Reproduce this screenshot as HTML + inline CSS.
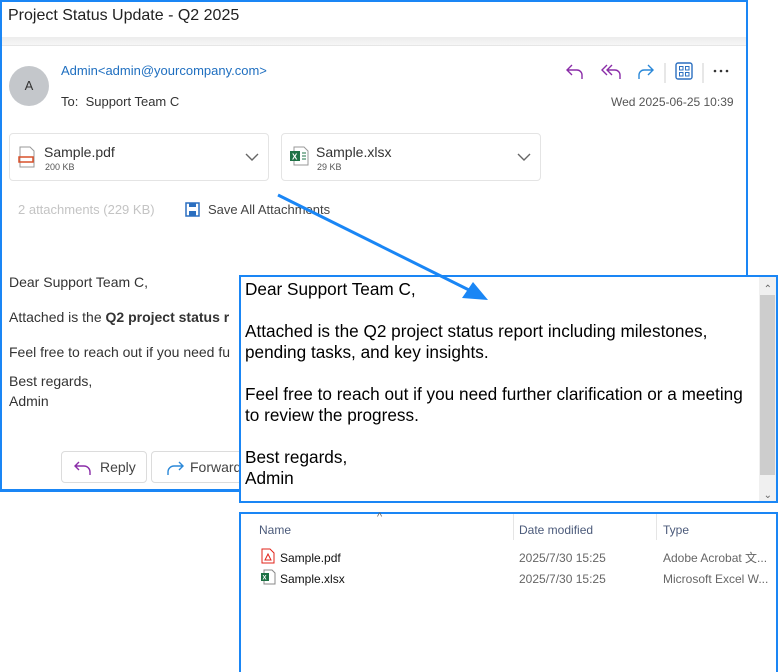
<!DOCTYPE html>
<html><head><meta charset="utf-8"><style>
*{margin:0;padding:0;box-sizing:border-box}
body{width:778px;height:672px;background:#fff;font-family:"Liberation Sans",sans-serif;position:relative;overflow:hidden;color:#242424}
.a{position:absolute}
.mail{left:0;top:0;width:748px;height:492px;border:2px solid #1a86f5;border-bottom-width:3px}
.title{left:8px;top:7px;font-size:16px;color:#222}
.shadow{left:2px;top:37px;width:744px;height:9px;background:linear-gradient(#ececec,#f6f6f6);border-bottom:1px solid #e6e6e6}
.av{left:9px;top:66px;width:40px;height:40px;border-radius:50%;background:#c4c7cb;font-size:13px;text-align:center;line-height:40px;color:#333}
.att{height:48px;border:1px solid #e4e4e4;border-radius:4px;top:133px}
.btn{top:451px;height:32px;border:1px solid #dcdcdc;border-radius:4px;font-size:14px;color:#444;line-height:30px}
.tb{left:239px;top:275px;width:539px;height:228px;border:2px solid #1a86f5;background:#fff;font-family:"Liberation Sans",sans-serif;font-size:17.2px;color:#000;line-height:21px}
.ex{left:239px;top:512px;width:539px;height:160px;border:2px solid #1a86f5;border-bottom:none;background:#fff;font-size:12px}
</style></head><body>
<div class="a mail"></div>
<div class="a title">Project Status Update - Q2 2025</div>
<div class="a shadow"></div>
<div class="a av">A</div>
<div class="a" style="left:61px;top:63px;font-size:13px;color:#1f6fc0">Admin&lt;admin@yourcompany.com&gt;</div>
<div class="a" style="left:61px;top:94px;font-size:13px;color:#333">To:&nbsp; Support Team C</div>
<div class="a" style="left:611px;top:95px;font-size:12px;color:#555">Wed 2025-06-25 10:39</div>
<svg class="a" style="left:560px;top:58px" width="180" height="28" fill="none" stroke-width="1.4">
<path d="M12 7l-5 5 5 5M7 12h10a5 5 0 0 1 5 5v4" stroke="#8a2da8"/>
<path d="M47 7l-5 5 5 5M52 7l-5 5 5 5M47 12h8a5 5 0 0 1 5 5v4" stroke="#8a2da8"/>
<path d="M88 7l5 5-5 5M93 12h-9a5 5 0 0 0-5 5v4" stroke="#2b88d8"/>
<path d="M105 5v20M143 5v20" stroke="#ddd"/>
<rect x="116" y="5" width="16" height="16" rx="2" stroke="#2b6fc0"/>
<rect x="119.5" y="8.5" width="3.5" height="3.5" stroke="#2b6fc0" stroke-width="1"/><rect x="125.5" y="8.5" width="3.5" height="3.5" stroke="#2b6fc0" stroke-width="1"/><rect x="119.5" y="14.5" width="3.5" height="3.5" stroke="#2b6fc0" stroke-width="1"/><rect x="125.5" y="14.5" width="3.5" height="3.5" stroke="#2b6fc0" stroke-width="1"/>
<circle cx="155" cy="13" r="1.3" fill="#333" stroke="none"/><circle cx="161" cy="13" r="1.3" fill="#333" stroke="none"/><circle cx="167" cy="13" r="1.3" fill="#333" stroke="none"/>
</svg>
<div class="a att" style="left:9px;width:260px"></div>
<div class="a att" style="left:281px;width:260px"></div>
<svg class="a" style="left:18px;top:146px" width="18" height="22"><path d="M2 1h10l4 4v16H2z" fill="#fff" stroke="#999"/><rect x="1" y="11" width="14" height="5" fill="none" stroke="#d9502a" stroke-width="1.5"/></svg>
<svg class="a" style="left:289px;top:146px" width="20" height="20"><path d="M5 1h10l4 4v14H5z" fill="#fff" stroke="#999"/><path d="M13 7h4M13 10h4M13 13h4" stroke="#1e7145"/><rect x="1" y="5" width="10" height="10" fill="#1e7145"/><text x="3" y="13.5" font-size="8" font-weight="bold" fill="#fff" font-family="Liberation Sans">X</text></svg>
<div class="a" style="left:44px;top:144px;font-size:14px;color:#333">Sample.pdf</div>
<div class="a" style="left:45px;top:162px;font-size:9px;color:#555">200 KB</div>
<div class="a" style="left:316px;top:144px;font-size:14px;color:#333">Sample.xlsx</div>
<div class="a" style="left:317px;top:162px;font-size:9px;color:#555">29 KB</div>
<svg class="a" style="left:244px;top:152px" width="300" height="12" fill="none" stroke="#666" stroke-width="1.4"><path d="M2 2l6 6 6-6M274 2l6 6 6-6"/></svg>
<div class="a" style="left:18px;top:202px;font-size:13px;color:#c4c4c4">2 attachments (229 KB)</div>
<svg class="a" style="left:185px;top:202px" width="15" height="15"><rect x="1" y="1" width="13" height="13" fill="none" stroke="#2b6fc0" stroke-width="1.5"/><rect x="4" y="1" width="7" height="4" fill="#2b6fc0"/><rect x="4" y="9" width="7" height="5" fill="#2b6fc0"/></svg>
<div class="a" style="left:208px;top:202px;font-size:13px;color:#444">Save All Attachments</div>
<div class="a" style="left:9px;top:265px;font-size:14px;color:#333;line-height:35px">Dear Support Team C,<br>Attached is the <b>Q2 project status r</b><br>Feel free to reach out if you need fu</div>
<div class="a" style="left:9px;top:371px;font-size:14px;color:#333;line-height:20px">Best regards,<br>Admin</div>
<div class="a btn" style="left:61px;width:86px"><svg class="a" style="left:12px;top:8px" width="20" height="16" fill="none" stroke="#8a2da8" stroke-width="1.4"><path d="M5 2L1 6l4 4M1 6h9a6 6 0 0 1 6 6v3"/></svg><span class="a" style="left:38px">Reply</span></div>
<div class="a btn" style="left:151px;width:100px"><svg class="a" style="left:12px;top:8px" width="20" height="16" fill="none" stroke="#2b88d8" stroke-width="1.4"><path d="M15 2l4 4-4 4M19 6h-9a6 6 0 0 0-6 6v3"/></svg><span class="a" style="left:38px">Forward</span></div>
<div class="a tb"><div class="a" style="left:4px;top:2px;white-space:nowrap">Dear Support Team C,<br><br>Attached is the Q2 project status report including milestones,<br>pending tasks, and key insights.<br><br>Feel free to reach out if you need further clarification or a meeting<br>to review the progress.<br><br>Best regards,<br>Admin</div>
<div class="a" style="right:0;top:0;width:17px;height:224px;background:#f0f0f0"></div>
<div class="a" style="right:1px;top:18px;width:15px;height:180px;background:#cdcdcd"></div>
<div class="a" style="right:4px;top:2px;font-size:10px;color:#666">&#8963;</div>
<div class="a" style="right:4px;top:208px;font-size:10px;color:#666">&#8964;</div></div>
<svg class="a" style="left:270px;top:185px" width="230" height="125"><path d="M8 10L205 108" stroke="#1a86f5" stroke-width="3"/><path d="M218 115L192 113L203 97Z" fill="#1a86f5"/></svg>
<div class="a ex">
<div class="a" style="left:136px;top:-3px;font-size:11px;color:#666">^</div>
<div class="a" style="left:18px;top:9px;color:#4b5a7a">Name</div>
<div class="a" style="left:272px;top:0;width:1px;height:26px;background:#e5e5e5"></div>
<div class="a" style="left:415px;top:0;width:1px;height:26px;background:#e5e5e5"></div>
<div class="a" style="left:278px;top:9px;color:#4b5a7a">Date modified</div>
<div class="a" style="left:422px;top:9px;color:#4b5a7a">Type</div>
<svg class="a" style="left:20px;top:34px" width="14" height="16"><path d="M1 1h8l4 4v10H1z" fill="#fff" stroke="#e2231a"/><path d="M4 12l3-6 3 6z" fill="none" stroke="#e2231a"/></svg>
<svg class="a" style="left:19px;top:55px" width="16" height="16"><path d="M4 1h8l3 3v11H4z" fill="#fff" stroke="#888"/><rect x="1" y="4" width="8" height="8" fill="#1e7145"/><text x="2.5" y="10.5" font-size="6" font-weight="bold" fill="#fff" font-family="Liberation Sans">X</text></svg>
<div class="a" style="left:39px;top:37px;color:#111">Sample.pdf</div>
<div class="a" style="left:39px;top:58px;color:#111">Sample.xlsx</div>
<div class="a" style="left:278px;top:37px;color:#666">2025/7/30 15:25</div>
<div class="a" style="left:278px;top:58px;color:#666">2025/7/30 15:25</div>
<div class="a" style="left:422px;top:37px;color:#666;font-family:'Liberation Sans','Noto Sans CJK SC',sans-serif;line-height:14px">Adobe Acrobat 文...</div>
<div class="a" style="left:422px;top:58px;color:#666">Microsoft Excel W...</div>
</div>
</body></html>
